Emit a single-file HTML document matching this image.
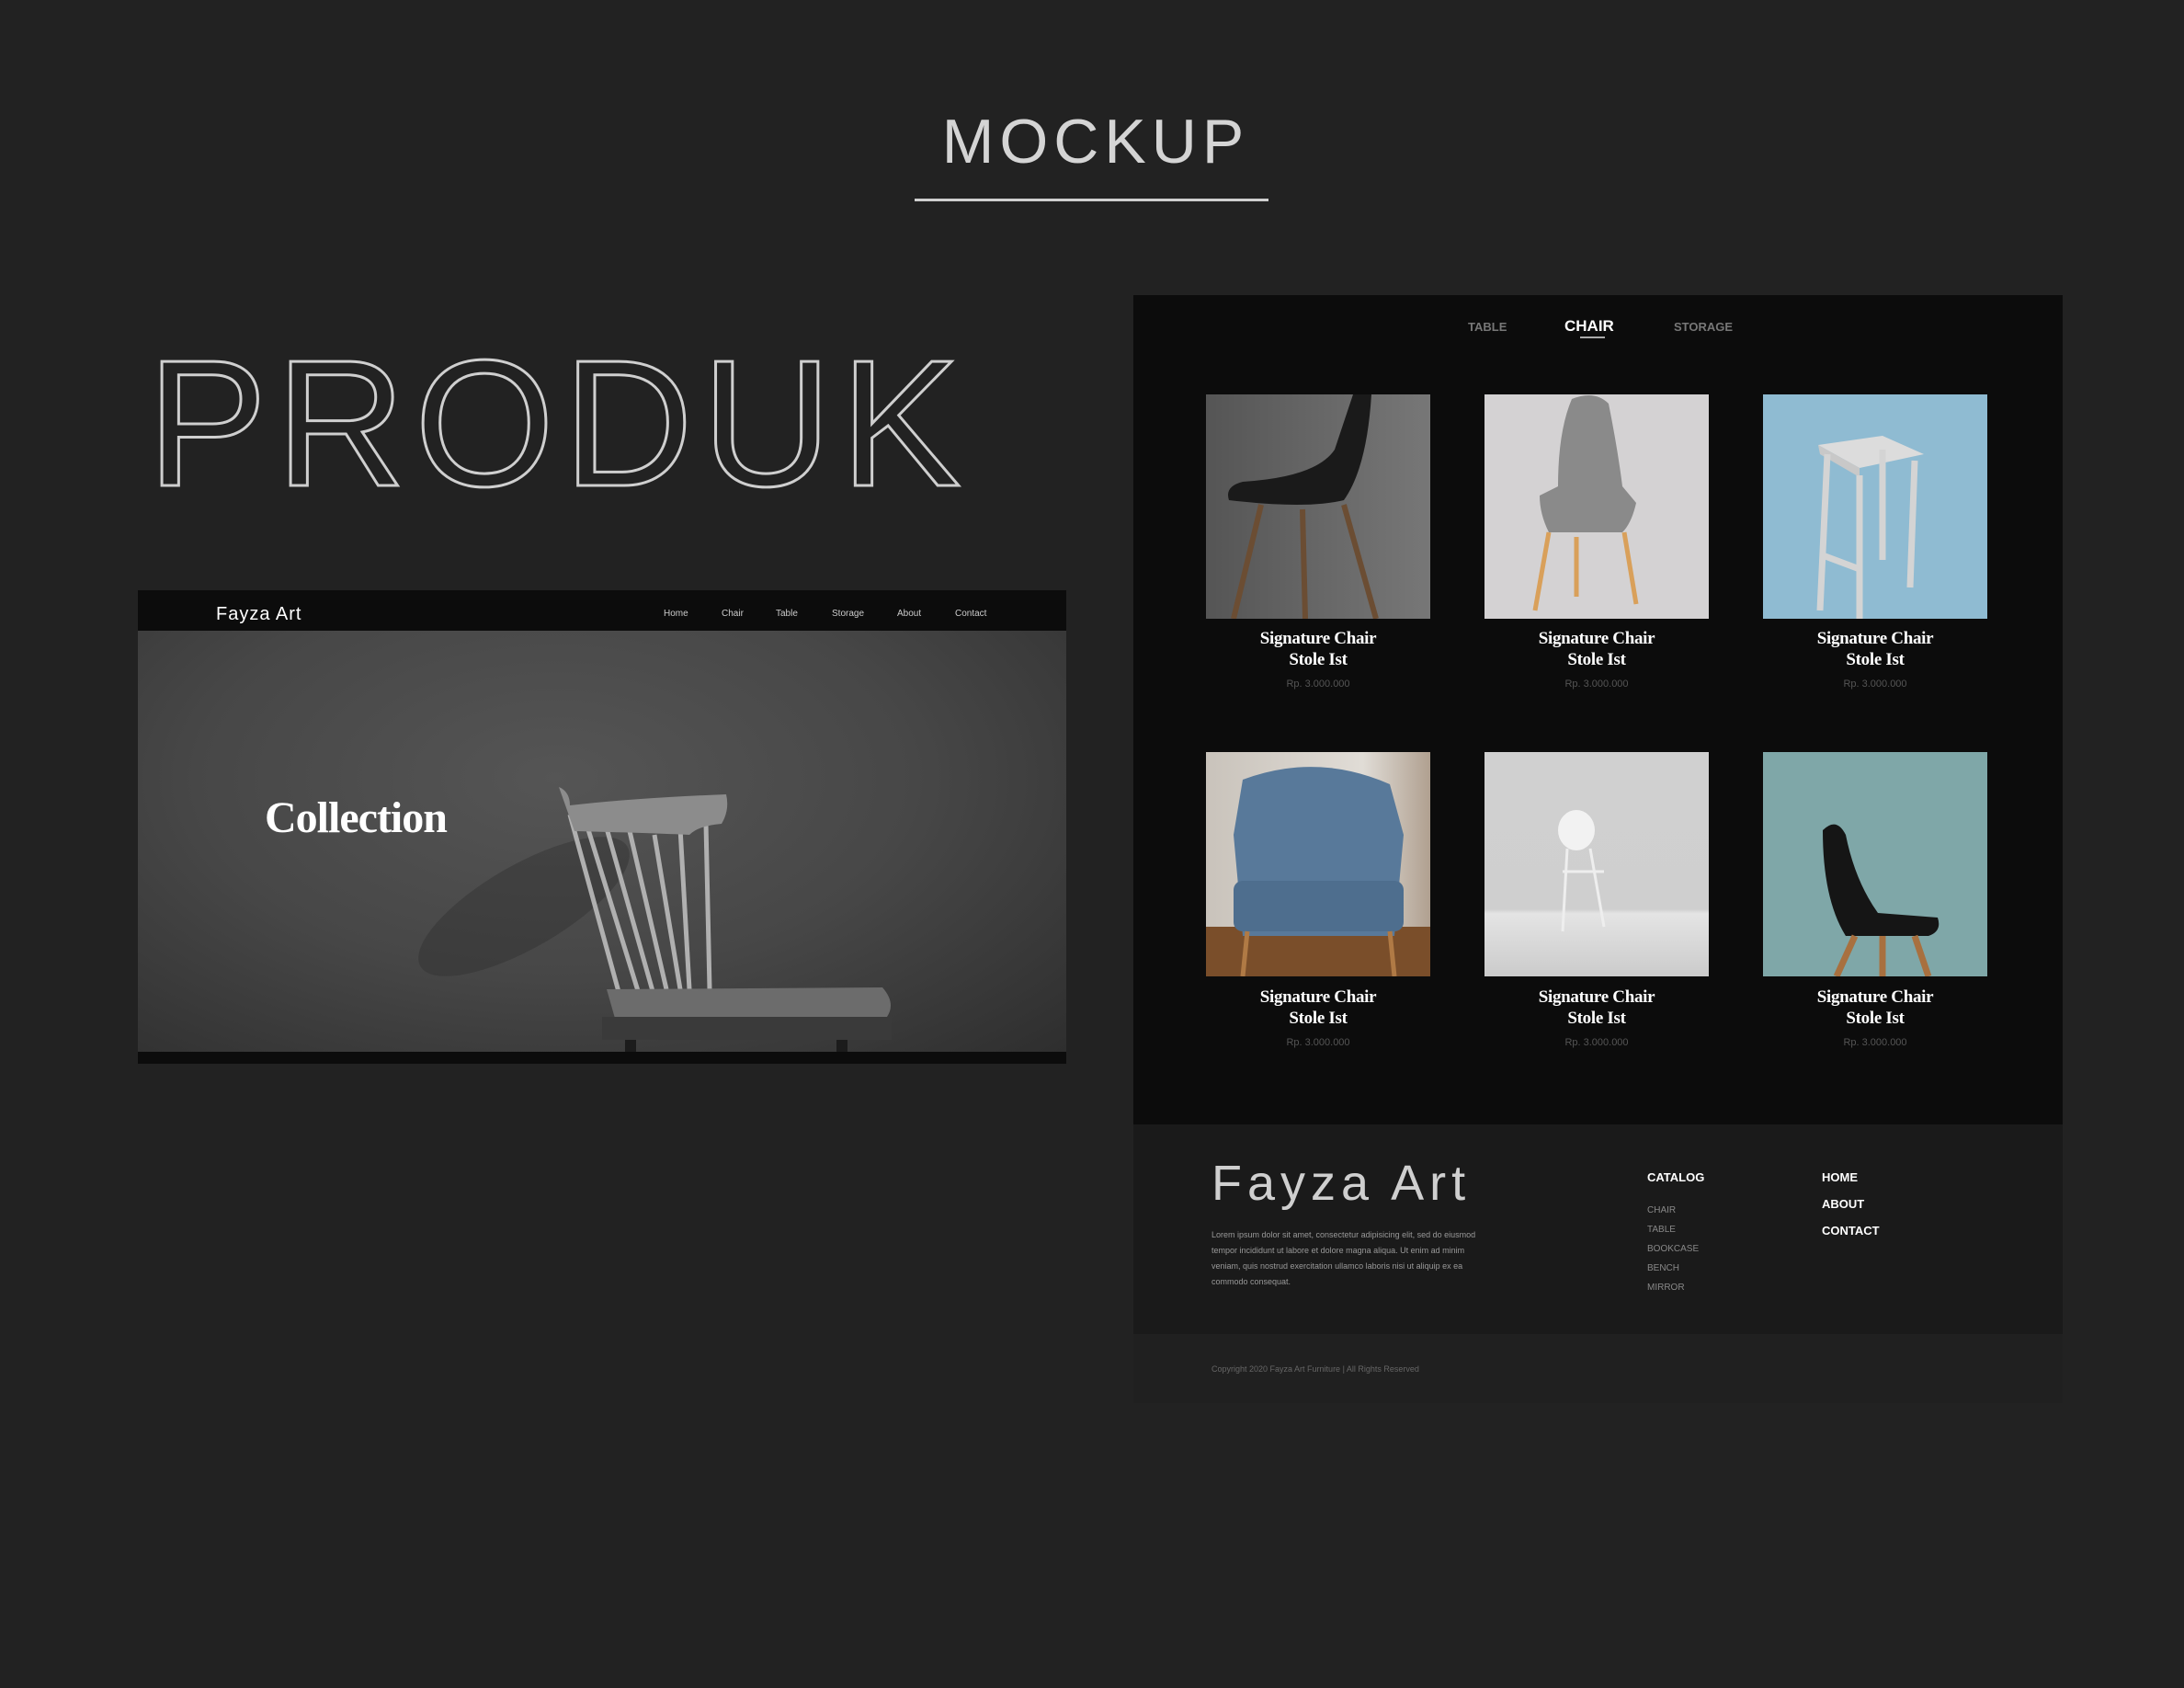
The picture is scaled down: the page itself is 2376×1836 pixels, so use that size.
<!DOCTYPE html>
<html><head><meta charset="utf-8"><style>
*{margin:0;padding:0;box-sizing:border-box}
body{width:2376px;height:1836px;background:#222222;position:relative;overflow:hidden;font-family:"Liberation Sans",sans-serif}
.a{position:absolute}
.serif{font-family:"Liberation Serif",serif;font-weight:bold}
.pt{color:#fff;font-size:19px;text-align:center;width:244px;line-height:23px;letter-spacing:-0.3px}
.pr{color:#555;font-size:11px;text-align:center;width:244px}
.img{position:absolute;width:244px;height:244px;overflow:hidden}
</style></head><body>
<div class="a" style="left:0;width:2376px;top:114px;text-align:center;color:#d4d4d4;font-size:68px;letter-spacing:6px;line-height:80px;padding-left:8px">MOCKUP</div>
<div class="a" style="left:995px;top:216px;width:385px;height:3px;background:#cfcfcf"></div>
<svg class="a" style="left:150px;top:370px" width="920" height="180"><text x="10" y="158" font-family="Liberation Sans" font-size="196" fill="none" stroke="#cfcfcf" stroke-width="3" textLength="885" lengthAdjust="spacing">PRODUK</text></svg>

<!-- left mockup -->
<div class="a" style="left:150px;top:642px;width:1010px;height:515px;background:#0c0c0c">
 <div class="a" style="left:85px;top:15px;color:#fff;font-size:20px;letter-spacing:1px">Fayza Art</div>
 <div class="a" style="left:0;top:20px;width:1010px;color:#ccc;font-size:10px">
  <span class="a" style="left:572px">Home</span><span class="a" style="left:635px">Chair</span><span class="a" style="left:694px">Table</span><span class="a" style="left:755px">Storage</span><span class="a" style="left:826px">About</span><span class="a" style="left:889px">Contact</span>
 </div>
 <div class="a" style="left:0;top:44px;width:1010px;height:458px;background:radial-gradient(ellipse at 45% 35%,#555 0%,#474747 50%,#2e2e2e 100%)">
  <svg width="1010" height="458">
   <ellipse cx="420" cy="300" rx="130" ry="45" fill="#2c2c2c" opacity="0.4" transform="rotate(-30 420 300)"/>
   <g stroke="#b0b0b0" stroke-width="5" fill="none">
    <line x1="470" y1="200" x2="525" y2="400"/><line x1="488" y1="210" x2="545" y2="395"/><line x1="510" y1="215" x2="560" y2="392"/><line x1="535" y1="218" x2="575" y2="390"/><line x1="562" y1="222" x2="590" y2="390"/><line x1="590" y1="215" x2="600" y2="390"/><line x1="618" y1="210" x2="622" y2="390"/>
   </g>
   <path d="M458 170 Q470 175 470 190 Q540 182 640 178 Q644 195 635 210 Q610 212 600 222 Q560 220 475 218 Z" fill="#8c8c8c"/>
   <path d="M510 390 L810 388 Q825 405 815 420 L520 425 Z" fill="#6c6c6c"/>
   <rect x="505" y="420" width="315" height="25" fill="#3a3a3a"/>
   <rect x="530" y="445" width="12" height="13" fill="#1c1c1c"/><rect x="760" y="445" width="12" height="13" fill="#1c1c1c"/>
  </svg>
  <div class="a serif" style="left:138px;top:176px;color:#fff;font-size:48px;letter-spacing:-1px">Collection</div>
 </div>
</div>

<!-- right panel -->
<div class="a" style="left:1233px;top:321px;width:1011px;height:902px;background:#0c0c0c">
 <div class="a" style="left:364px;top:27px;color:#777;font-size:13px;font-weight:bold">TABLE</div>
 <div class="a" style="left:469px;top:24px;color:#fff;font-size:17px;font-weight:bold">CHAIR</div>
 <div class="a" style="left:486px;top:45px;width:27px;height:2px;background:#aaa"></div>
 <div class="a" style="left:588px;top:27px;color:#777;font-size:13px;font-weight:bold">STORAGE</div>
</div>
<!-- products -->
<div class="img" style="left:1312px;top:429px;background:linear-gradient(90deg,#555,#6a6a6a 60%,#777)">
 <svg width="244" height="244"><path d="M160 0 L180 0 Q175 80 150 115 Q110 125 25 115 Q20 100 40 95 Q120 90 140 60 Z" fill="#1a1a1a"/>
 <g stroke="#6b4d33" stroke-width="6"><line x1="60" y1="120" x2="30" y2="244"/><line x1="150" y1="120" x2="185" y2="244"/><line x1="105" y1="125" x2="108" y2="244"/></g></svg>
</div>
<div class="img" style="left:1615px;top:429px;background:#d4d2d3">
 <svg width="244" height="244"><path d="M95 5 Q120 -5 135 10 Q145 60 150 100 L165 118 Q160 140 150 150 L70 150 Q60 130 60 110 L80 100 Q80 40 95 5Z" fill="#8a8a8a"/>
 <g stroke="#d9a05a" stroke-width="5"><line x1="70" y1="150" x2="55" y2="235"/><line x1="152" y1="150" x2="165" y2="228"/><line x1="100" y1="155" x2="100" y2="220"/></g></svg>
</div>
<div class="img" style="left:1918px;top:429px;background:#8fbbd2">
 <svg width="244" height="244"><path d="M60 55 L130 45 L175 65 L105 80 Z" fill="#dcdcdc"/><path d="M60 55 L105 80 L105 90 L62 65Z" fill="#c8c8c8"/>
 <g stroke="#d4d4d4" stroke-width="7"><line x1="70" y1="65" x2="62" y2="235"/><line x1="105" y1="88" x2="105" y2="244"/><line x1="165" y1="72" x2="160" y2="210"/><line x1="130" y1="60" x2="130" y2="180"/><line x1="65" y1="175" x2="105" y2="190"/></g></svg>
</div>
<div class="img" style="left:1312px;top:818px;background:linear-gradient(90deg,#c9c3bb 0%,#e0dcd6 70%,#b0a090 100%)">
 <div class="a" style="left:0;top:190px;width:244px;height:54px;background:#7a4e2a"></div>
 <svg class="a" width="244" height="244"><path d="M40 30 Q120 0 200 35 L215 90 L205 200 L40 200 L30 90 Z" fill="#58799a"/><rect x="30" y="140" width="185" height="55" rx="10" fill="#4e6e8e"/>
 <g stroke="#b07a45" stroke-width="5"><line x1="45" y1="195" x2="40" y2="244"/><line x1="200" y1="195" x2="205" y2="244"/></g></svg>
</div>
<div class="img" style="left:1615px;top:818px;background:linear-gradient(180deg,#d0d0d0 0%,#cfcfcf 70%,#e4e4e4 72%,#cbcbcb 100%)">
 <svg width="244" height="244"><ellipse cx="100" cy="85" rx="20" ry="22" fill="#f2f2f2"/><g stroke="#eee" stroke-width="3"><line x1="90" y1="105" x2="85" y2="195"/><line x1="115" y1="105" x2="130" y2="190"/><line x1="85" y1="130" x2="130" y2="130"/></g></svg>
</div>
<div class="img" style="left:1918px;top:818px;background:#7fa7a8">
 <svg width="244" height="244"><path d="M65 85 Q80 70 90 90 Q100 140 125 175 L190 180 Q195 195 180 200 L90 200 Q65 160 65 85Z" fill="#151515"/>
 <g stroke="#a8703f" stroke-width="7"><line x1="100" y1="200" x2="80" y2="244"/><line x1="165" y1="200" x2="180" y2="244"/><line x1="130" y1="200" x2="130" y2="244"/></g></svg>
</div>
<!-- titles -->
<div class="a serif pt" style="left:1312px;top:683px">Signature Chair<br>Stole Ist</div>
<div class="a serif pt" style="left:1615px;top:683px">Signature Chair<br>Stole Ist</div>
<div class="a serif pt" style="left:1918px;top:683px">Signature Chair<br>Stole Ist</div>
<div class="a pr" style="left:1312px;top:738px">Rp. 3.000.000</div>
<div class="a pr" style="left:1615px;top:738px">Rp. 3.000.000</div>
<div class="a pr" style="left:1918px;top:738px">Rp. 3.000.000</div>
<div class="a serif pt" style="left:1312px;top:1073px">Signature Chair<br>Stole Ist</div>
<div class="a serif pt" style="left:1615px;top:1073px">Signature Chair<br>Stole Ist</div>
<div class="a serif pt" style="left:1918px;top:1073px">Signature Chair<br>Stole Ist</div>
<div class="a pr" style="left:1312px;top:1128px">Rp. 3.000.000</div>
<div class="a pr" style="left:1615px;top:1128px">Rp. 3.000.000</div>
<div class="a pr" style="left:1918px;top:1128px">Rp. 3.000.000</div>

<!-- footer -->
<div class="a" style="left:1233px;top:1223px;width:1011px;height:228px;background:#1a1a1a">
 <div class="a" style="left:85px;top:33px;color:#cfcfcf;font-size:54px;letter-spacing:6px">Fayza Art</div>
 <div class="a" style="left:85px;top:112px;width:300px;color:#999;font-size:9px;line-height:17px">Lorem ipsum dolor sit amet, consectetur adipisicing elit, sed do eiusmod tempor incididunt ut labore et dolore magna aliqua. Ut enim ad minim veniam, quis nostrud exercitation ullamco laboris nisi ut aliquip ex ea commodo consequat.</div>
 <div class="a" style="left:559px;top:50px;color:#fff;font-size:13px;font-weight:bold">CATALOG</div>
 <div class="a" style="left:559px;top:83px;color:#888;font-size:10px;line-height:21px">CHAIR<br>TABLE<br>BOOKCASE<br>BENCH<br>MIRROR</div>
 <div class="a" style="left:749px;top:43px;color:#fff;font-size:13px;font-weight:bold;line-height:29px">HOME<br>ABOUT<br>CONTACT</div>
</div>
<div class="a" style="left:1233px;top:1451px;width:1011px;height:75px;background:#202020">
 <div class="a" style="left:85px;top:33px;color:#666;font-size:9px">Copyright 2020 Fayza Art Furniture | All Rights Reserved</div>
</div>
</body></html>
